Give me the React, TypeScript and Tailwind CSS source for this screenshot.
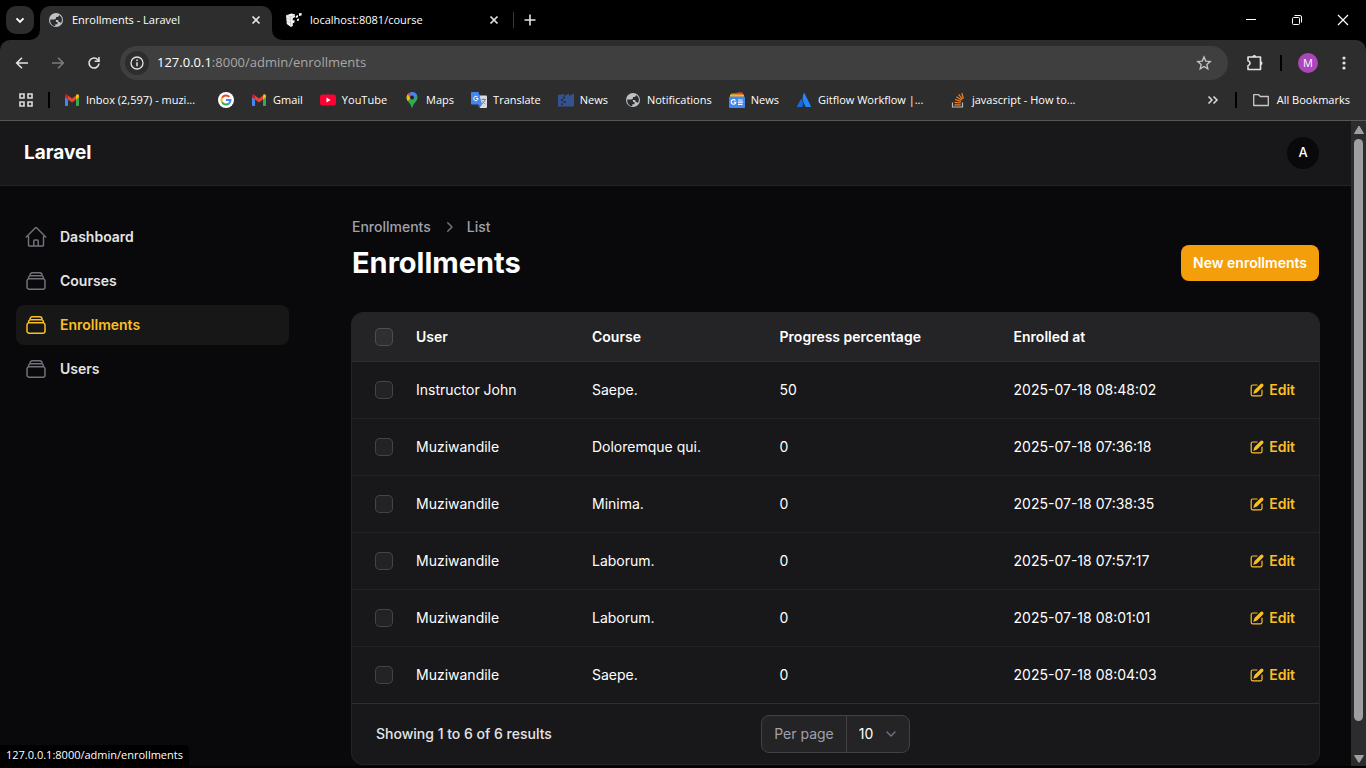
import type { ReactNode } from 'react';
import {
  HiOutlineHome,
  HiOutlineRectangleStack,
  HiMiniPencilSquare,
  HiMiniChevronRight,
} from 'react-icons/hi2';

/* ---------- browser icons ---------- */

function Globe() {
  return (
    <svg viewBox="0 0 16 16" className="size-4 shrink-0" aria-hidden="true">
      <circle cx="8" cy="8" r="7" fill="#bdc1c6" />
      <path
        d="M2.200 7.400H6c1.400 0 2 .8 2 1.800v.8h1.500v2.200H7.300v1.900C4.200 14 2 11.300 2.200 7.400zM10.900 3v.6c0 .9-.6 1.400-1.500 1.400H8v1.300c0 .5-.4.8-.8.800H5.900v1h3.600c.6 0 1 .4 1 1V10h.9c.7 0 1.200.4 1.400 1 1.900-2.300 1.500-6-1.900-8z"
        fill="#2d2d2d"
      />
    </svg>
  );
}

function Cubes() {
  return (
    <svg viewBox="0 0 16 16" className="size-4 shrink-0" aria-hidden="true">
      <path d="M0 3.200L5.500 1.400 9 2.600V5L6.800 6.200v2.300L8.500 8v2.500l-1.700.8V14l-2 1L.8 12z" fill="#f4f4f4" />
      <path d="M.4 6l4.200 1.600M.6 9l4 1.900M4.700 4.800V15M.4 3.400l4.300 1.400L9 3" stroke="#8a8a8a" strokeWidth=".4" fill="none" />
      <path d="M9.800 4l2.200-1v2.200l-2.200.8zM13 1.300l2.600-.4v2.600l-2.600.5zM11 7.200l2-.7v2l-2 .6z" fill="#f4f4f4" />
    </svg>
  );
}

function GmailIcon() {
  return (
    <svg viewBox="0 0 16 16" className="size-4 shrink-0" aria-hidden="true">
      <path d="M1 4.500V13c0 .6.400 1 1 1h2V6.800z" fill="#4285f4" />
      <path d="M15 4.500V13c0 .6-.4 1-1 1h-2V6.800z" fill="#34a853" />
      <path d="M12 3.500v4l3-2.300V4c0-1.500-1.600-2.200-2.700-1.300z" fill="#fbbc04" />
      <path d="M4 7.500v-4l4 3 4-3v4l-4 3z" fill="#ea4335" />
      <path d="M1 4v1.200l3 2.300v-4l-.4-.8C2.500 1.900 1 2.600 1 4z" fill="#c5221f" />
    </svg>
  );
}

function GoogleIcon() {
  return (
    <svg viewBox="0 0 16 16" className="size-4 shrink-0" aria-hidden="true">
      <circle cx="8" cy="8" r="8" fill="#fff" />
      <g fill="none" strokeWidth="2">
        <path d="M11.300 4.900A4.500 4.500 0 0 0 4.100 5.700" stroke="#ea4335" />
        <path d="M4.100 5.700a4.500 4.500 0 0 0 0 4.600" stroke="#fbbc05" />
        <path d="M4.100 10.300a4.500 4.500 0 0 0 6.800 1.200" stroke="#34a853" />
        <path d="M10.900 11.500A4.500 4.500 0 0 0 12.500 8H8" stroke="#4285f4" />
      </g>
    </svg>
  );
}

function YouTubeIcon() {
  return (
    <svg viewBox="0 0 16 16" className="size-4 shrink-0" aria-hidden="true">
      <rect x="0" y="2.500" width="16" height="11" rx="2.800" fill="#ff0033" />
      <path d="M6.500 5.600v4.800L10.600 8z" fill="#fff" />
    </svg>
  );
}

function MapsIcon() {
  return (
    <svg viewBox="0 0 16 16" className="size-4 shrink-0" aria-hidden="true">
      <path d="M8 16c-.6 0-.7-2.400-2-4.200C4.600 9.900 2.600 8.400 2.600 5.400c0-1.300.4-2.300 1.100-3.200L8 5.400l5-2.500c.3.800.5 1.600.5 2.500 0 3-2.100 4.500-3.500 6.400-1.300 1.800-1.400 4.200-2 4.200z" fill="#34a853" />
      <path d="M2.600 5.400c0 1.500.5 2.700 1.200 3.700L9 4 5 1.200C3.500 2 2.600 3.600 2.600 5.400z" fill="#fbbc04" />
      <path d="M3.700 2.200A5.400 5.400 0 0 1 6.400.3l1 4.100-1.400 1z" fill="#ea4335" />
      <path d="M6.400.2c2.800-.8 5.700.5 6.800 3L9 8 6.200 4z" fill="#4285f4" />
      <circle cx="8" cy="5.400" r="2" fill="#202124" />
    </svg>
  );
}

function TranslateIcon() {
  return (
    <svg viewBox="0 0 16 16" className="size-4 shrink-0" aria-hidden="true">
      <path d="M6 3.500h9a1 1 0 0 1 1 1V15a1 1 0 0 1-1 1H9z" fill="#dadce0" />
      <path d="M1 0h6.500l3.700 12.500H1a1 1 0 0 1-1-1V1a1 1 0 0 1 1-1z" fill="#4285f4" />
      <path d="M8 16l3.200-3.500H7z" fill="#3367d6" />
      <path d="M6.700 5.200a2.200 2.200 0 1 0 .4 1.400H5" stroke="#fff" strokeWidth="1" fill="none" />
      <path d="M10.500 7.500h4.500M12.700 6.500v1M14 7.500c-.3 2-1.500 3.300-3 4.300M11.500 9c.7 1.500 1.600 2.400 2.800 3" stroke="#747a80" strokeWidth=".9" fill="none" />
    </svg>
  );
}

function FactoryIcon() {
  return (
    <svg viewBox="0 0 16 16" className="size-4 shrink-0" aria-hidden="true">
      <path d="M0 3l6-1v2l5-2.500V4l5-2.500V14.500H0z" fill="#35548f" />
      <path d="M5 4.500h2v2H5zM3 7h2v2H3zM5.500 9h2v2h-2zM3 11.500h2v1.500H3z" fill="#202c48" />
    </svg>
  );
}

function GoogleNewsIcon() {
  return (
    <svg viewBox="0 0 16 16" className="size-4 shrink-0" aria-hidden="true">
      <path d="M2 1.500L11 .5l1 4H2z" fill="#34a853" />
      <path d="M5 1.200l8.500-1L14.500 5H5z" fill="#ea4335" />
      <path d="M1 2.500h14V6H1z" fill="#fbbc04" />
      <rect y="4.500" width="16" height="11.500" rx="1" fill="#4285f4" />
      <path d="M6.400 8.600a2.300 2.300 0 1 0 .4 1.700H4.800M9 8h4.500M9 10.200h5M9 12.400h4.500" stroke="#fff" strokeWidth="1.200" fill="none" />
    </svg>
  );
}

function AtlassianIcon() {
  return (
    <svg viewBox="0 0 16 16" className="size-4 shrink-0" aria-hidden="true">
      <path d="M4.900 7.300c.2-.3.700-.3.900.1C7.300 10 7.500 12.300 6.300 15H1.500a.5.500 0 0 1-.5-.7z" fill="#1868db" />
      <path d="M7.700 1.300c.2-.4.600-.4.800 0l6.400 13a.5.500 0 0 1-.4.700H10c-.3 0-.5-.1-.6-.4C7 9.500 5.700 6.500 7.700 1.300z" fill="#2684ff" />
    </svg>
  );
}

function StackIcon() {
  return (
    <svg viewBox="0 0 16 16" className="size-4 shrink-0" aria-hidden="true">
      <path d="M2.500 10.500V15h10v-4.500" stroke="#bcbbbb" strokeWidth="1.200" fill="none" />
      <path d="M4.500 12.800h6.200M4.600 10.300l6.100.7M5.100 7.500l5.900 1.900M6.400 4.700l5.200 3.400M8.600 2.300l3.900 4.900M11.800 1l1.600 5.500" stroke="#f48024" strokeWidth="1.200" fill="none" />
    </svg>
  );
}

function Close() {
  return (
    <svg viewBox="0 0 16 16" className="size-4" aria-hidden="true">
      <path d="M4.500 4.500l7 7M11.500 4.500l-7 7" stroke="#e3e3e3" strokeWidth="1.700" />
    </svg>
  );
}

/* ---------- browser chrome ---------- */

function TabStrip() {
  return (
    <div className="flex h-10 shrink-0 items-end bg-black pl-1.5 text-[11px]">
      <button aria-label="Search tabs" className="mb-1.5 flex size-7 items-center justify-center rounded-[10px] bg-[#2d2d2d]">
        <svg viewBox="0 0 16 16" className="size-4" aria-hidden="true">
          <path d="M4.500 6.300L8 9.800l3.500-3.500" stroke="#fff" strokeWidth="1.900" fill="none" />
        </svg>
      </button>
      <div className="relative ml-1.5 flex h-[34px] w-[232px] items-center rounded-t-[10px] bg-[#2d2d2d] pr-2 pb-1.5 pl-2">
        <svg viewBox="0 0 10 10" className="absolute bottom-0 -left-2.5 size-2.5" aria-hidden="true">
          <path d="M10 0v10H0A10 10 0 0 0 10 0z" fill="#2d2d2d" />
        </svg>
        <svg viewBox="0 0 10 10" className="absolute -right-2.5 bottom-0 size-2.5" aria-hidden="true">
          <path d="M0 0v10h10A10 10 0 0 1 0 0z" fill="#2d2d2d" />
        </svg>
        <Globe />
        <span className="ml-2 flex-1 text-white">Enrollments - Laravel</span>
        <button aria-label="Close tab"><Close /></button>
      </div>
      <div className="flex h-[34px] w-[241px] items-center pr-[11px] pb-1.5 pl-3.5">
        <Cubes />
        <span className="ml-2 flex-1 text-white">localhost:8081/course</span>
        <button aria-label="Close tab"><Close /></button>
      </div>
      <div className="mb-3 h-4 w-px bg-[#3a3a3a]" />
      <button aria-label="New tab" className="mb-3 ml-2">
        <svg viewBox="0 0 16 16" className="size-4" aria-hidden="true">
          <path d="M8 2.500v11M2.500 8h11" stroke="#e3e3e3" strokeWidth="1.600" />
        </svg>
      </button>
      <div className="ml-auto flex h-10 items-center">
        <button aria-label="Minimize" className="flex w-[46px] justify-center">
          <svg viewBox="0 0 12 12" className="size-3" aria-hidden="true"><path d="M1 5.500h10" stroke="#fff" /></svg>
        </button>
        <button aria-label="Restore" className="flex w-[46px] justify-center">
          <svg viewBox="0 0 12 12" className="size-3" aria-hidden="true">
            <rect x="1.500" y="3.500" width="7" height="7" rx="1" stroke="#fff" fill="none" />
            <path d="M3.500 1.500H9A1.500 1.500 0 0 1 10.500 3v5.500" stroke="#fff" fill="none" />
          </svg>
        </button>
        <button aria-label="Close window" className="flex w-[46px] justify-center">
          <svg viewBox="0 0 12 12" className="size-3" aria-hidden="true"><path d="M1 1l10 10M11 1L1 11" stroke="#fff" strokeWidth="1.200" /></svg>
        </button>
      </div>
    </div>
  );
}

function AddressBar() {
  return (
    <div className="flex h-[46px] shrink-0 items-center rounded-t-[10px] bg-[#2d2d2d]">
      <div className="flex w-[120px] items-center gap-5 pl-3.5">
        <button aria-label="Back">
          <svg viewBox="0 0 16 16" className="size-4" aria-hidden="true">
            <path d="M14 8H3M8 2.700L2.700 8 8 13.300" stroke="#e3e3e3" strokeWidth="1.600" fill="none" />
          </svg>
        </button>
        <button aria-label="Forward">
          <svg viewBox="0 0 16 16" className="size-4" aria-hidden="true">
            <path d="M2 8h11M8 2.700L13.300 8 8 13.300" stroke="#7c7c7c" strokeWidth="1.600" fill="none" />
          </svg>
        </button>
        <button aria-label="Reload">
          <svg viewBox="0 0 16 16" className="size-4" aria-hidden="true">
            <path d="M13 8.500A5 5 0 1 1 11.800 4.700L13.500 6.500" stroke="#e3e3e3" strokeWidth="1.600" fill="none" />
            <path d="M13.700 2v5H8.700V5.500h3.500V2z" fill="#e3e3e3" />
          </svg>
        </button>
      </div>
      <div className="flex h-[34px] flex-1 items-center rounded-full bg-[#3f3f3f] pr-4 pl-[5px]">
        <button aria-label="View site information" className="flex size-6 items-center justify-center rounded-full bg-[#2d2d2d]">
          <svg viewBox="0 0 16 16" className="size-4" aria-hidden="true">
            <circle cx="8" cy="8" r="6" stroke="#e3e3e3" strokeWidth="1.300" fill="none" />
            <path d="M8 7.200v4M8 4.500v1.500" stroke="#e3e3e3" strokeWidth="1.500" />
          </svg>
        </button>
        <span className="ml-2 flex-1 text-[13px] text-[#a8a8a8]">
          <span className="text-white">127.0.0.1</span>:8000/admin/enrollments
        </span>
        <button aria-label="Bookmark this tab">
          <svg viewBox="0 0 16 16" className="size-4" aria-hidden="true">
            <path d="M8 1.900l1.750 4.150 4.500.4-3.400 2.950 1 4.400L8 11.500l-3.850 2.300 1-4.400-3.400-2.950 4.500-.4z" stroke="#c7c7c7" strokeWidth="1.300" fill="none" />
          </svg>
        </button>
      </div>
      <div className="flex items-center pl-[17px]">
        <button aria-label="Extensions">
          <svg viewBox="0 0 20 20" className="size-5" aria-hidden="true">
            <path d="M3 4h12.500v12.500H3v-3.800a2.500 2.500 0 0 0 0-4.900z" stroke="#e3e3e3" strokeWidth="1.600" strokeLinejoin="round" fill="none" />
            <path d="M7.300 4a2 2 0 0 1 4 0zM15.500 8.200a2 2 0 0 1 0 4z" fill="#e3e3e3" />
          </svg>
        </button>
        <div className="ml-[15px] h-4 w-0.5 bg-black" />
        <button aria-label="Profile M" className="ml-4 flex size-5 items-center justify-center rounded-full bg-[#ab47bc] text-[11px] font-medium text-white">M</button>
        <button aria-label="Menu" className="mr-3.5 ml-[18px]">
          <svg viewBox="0 0 16 16" className="size-4" aria-hidden="true">
            <circle cx="8" cy="3" r="1.600" fill="#e3e3e3" />
            <circle cx="8" cy="8" r="1.600" fill="#e3e3e3" />
            <circle cx="8" cy="13" r="1.600" fill="#e3e3e3" />
          </svg>
        </button>
      </div>
    </div>
  );
}

const bookmarks: { icon: ReactNode; label?: string; long?: boolean }[] = [
  { icon: <GmailIcon />, label: 'Inbox (2,597) - muzi...', long: true },
  { icon: <GoogleIcon /> },
  { icon: <GmailIcon />, label: 'Gmail' },
  { icon: <YouTubeIcon />, label: 'YouTube' },
  { icon: <MapsIcon />, label: 'Maps' },
  { icon: <TranslateIcon />, label: 'Translate' },
  { icon: <FactoryIcon />, label: 'News' },
  { icon: <Globe />, label: 'Notifications' },
  { icon: <GoogleNewsIcon />, label: 'News' },
  { icon: <AtlassianIcon />, label: 'Gitflow Workflow |...', long: true },
  { icon: <StackIcon />, label: 'javascript - How to...', long: true },
];

function BookmarksBar() {
  return (
    <div className="flex h-[35px] shrink-0 items-center border-b border-[#565656] bg-[#2d2d2d] pb-1.5 text-[11px] text-white">
      <button aria-label="Tab groups" className="ml-[18px]">
        <svg viewBox="0 0 16 16" className="size-4" aria-hidden="true">
          <path d="M2 2h4v4H2zM10 2h4v4h-4zM2 10h4v4H2zM10 10h4v4h-4z" stroke="#dcdcdc" strokeWidth="1.600" fill="none" />
        </svg>
      </button>
      <div className="ml-3.5 h-4 w-0.5 bg-black" />
      <nav aria-label="Bookmarks" className="ml-3.5 flex items-center gap-[17px]">
        {bookmarks.map((b, i) => (
          <a key={i} href="#" aria-label={b.label ?? 'Google'} className="flex items-center gap-1.5 whitespace-nowrap">
            {b.icon}
            {b.label && <span className={b.long ? 'w-[115px]' : undefined}>{b.label}</span>}
          </a>
        ))}
      </nav>
      <button aria-label="More bookmarks" className="ml-auto">
        <svg viewBox="0 0 16 16" className="size-4" aria-hidden="true">
          <path d="M3.500 4.500L7 8l-3.500 3.500M8.500 4.500L12 8l-3.500 3.500" stroke="#dcdcdc" strokeWidth="1.500" fill="none" />
        </svg>
      </button>
      <div className="ml-3.5 h-4 w-0.5 bg-black" />
      <a href="#" className="mr-4 ml-4 flex items-center gap-2 whitespace-nowrap">
        <svg viewBox="0 0 16 16" className="size-4" aria-hidden="true">
          <path d="M.7 2.700h5l1.600 1.800h8v9H.7z" stroke="#c7c7c7" strokeWidth="1.300" strokeLinejoin="round" fill="none" />
        </svg>
        All Bookmarks
      </a>
    </div>
  );
}

function Scrollbar() {
  return (
    <div className="flex w-[15px] shrink-0 flex-col items-center bg-[#2c2c2c]" aria-hidden="true">
      <svg viewBox="0 0 10 8" className="mt-[5px] h-2 w-2.5"><path d="M5 0L9.500 7.500H.5z" fill="#9f9f9f" stroke="#9f9f9f" strokeLinejoin="round" /></svg>
      <div className="mt-[5px] mb-[34px] w-[9px] flex-1 rounded-full bg-[#9f9f9f]" />
      <svg viewBox="0 0 10 8" className="mb-[3px] h-2 w-2.5"><path d="M5 7.500L9.500.5H.5z" fill="#9f9f9f" stroke="#9f9f9f" strokeLinejoin="round" /></svg>
    </div>
  );
}

/* ---------- admin panel ---------- */

const navItems = [
  { label: 'Dashboard', Icon: HiOutlineHome },
  { label: 'Courses', Icon: HiOutlineRectangleStack },
  { label: 'Enrollments', Icon: HiOutlineRectangleStack, active: true },
  { label: 'Users', Icon: HiOutlineRectangleStack },
];

function Sidebar() {
  return (
    <nav aria-label="Main" className="flex w-80 shrink-0 flex-col gap-1 pt-[31px] pr-[31px] pl-4">
      {navItems.map(({ label, Icon, active }) => (
        <a
          key={label}
          href="#"
          className={`flex h-10 items-center gap-3 rounded-lg px-2 text-sm font-semibold ${
            active ? 'bg-[#171717] text-[#fbbf24]' : 'text-[#e4e4e7]'
          }`}
        >
          <Icon className={`size-6 ${active ? 'text-[#fbbf24]' : 'text-[#71717a]'}`} />
          {label}
        </a>
      ))}
    </nav>
  );
}

const rows = [
  ['Instructor John', 'Saepe.', '50', '2025-07-18 08:48:02'],
  ['Muziwandile', 'Doloremque qui.', '0', '2025-07-18 07:36:18'],
  ['Muziwandile', 'Minima.', '0', '2025-07-18 07:38:35'],
  ['Muziwandile', 'Laborum.', '0', '2025-07-18 07:57:17'],
  ['Muziwandile', 'Laborum.', '0', '2025-07-18 08:01:01'],
  ['Muziwandile', 'Saepe.', '0', '2025-07-18 08:04:03'],
];

function Checkbox({ label }: { label: string }) {
  return (
    <input
      type="checkbox"
      aria-label={label}
      className="block size-[18px] appearance-none rounded-[5px] border border-white/15 bg-white/5"
    />
  );
}

function EnrollmentsTable() {
  return (
    <section className="-mx-px mt-[31px] overflow-hidden rounded-xl border border-[#242427] bg-[#18181b]">
      <table className="w-full table-fixed border-collapse text-left text-sm text-white">
        <colgroup>
          <col className="w-[52px]" />
          <col className="w-[18.2%]" />
          <col className="w-[19.4%]" />
          <col className="w-[24.2%]" />
          <col />
          <col className="w-[12%]" />
        </colgroup>
        <thead>
          <tr className="h-[48px] border-b border-[#2f2f32] bg-[#242427]">
            <th className="pl-[23px]"><Checkbox label="Select all" /></th>
            <th className="px-3 font-semibold">User</th>
            <th className="px-3 font-semibold">Course</th>
            <th className="px-3 font-semibold">Progress percentage</th>
            <th className="px-3 font-semibold">Enrolled at</th>
            <th aria-label="Actions" />
          </tr>
        </thead>
        <tbody>
          {rows.map((row, i) => (
            <tr key={i} className="h-[57px] border-b border-[#242427] last:border-[#2f2f32]">
              <td className="pl-[23px]"><Checkbox label={`Select row ${i + 1}`} /></td>
              {row.map((cell, j) => (
                <td key={j} className="px-3">{cell}</td>
              ))}
              <td className="pr-6">
                <a href="#" className="flex items-center justify-end gap-1 font-semibold text-[#fbbf24]">
                  <HiMiniPencilSquare className="size-4" />
                  Edit
                </a>
              </td>
            </tr>
          ))}
        </tbody>
      </table>
      <div className="grid h-[60px] grid-cols-[1fr_auto_1fr] items-center px-6">
        <span className="text-sm font-medium text-[#e4e4e7]">Showing 1 to 6 of 6 results</span>
        <div className="relative flex h-[38px] items-center rounded-lg border border-[#414144] bg-[#242427] text-sm text-white">
          <label htmlFor="per-page" className="flex h-full items-center border-r border-[#414144] px-3 text-[#a1a1aa]">Per page</label>
          <select id="per-page" defaultValue="10" className="h-full w-[62px] appearance-none bg-transparent pl-3 text-white">
            <option>5</option>
            <option>10</option>
            <option>25</option>
            <option>50</option>
          </select>
          <svg viewBox="0 0 20 20" className="pointer-events-none absolute right-2 size-5" aria-hidden="true">
            <path d="M6 8l4 4 4-4" stroke="#6b7280" strokeWidth="1.500" strokeLinecap="round" strokeLinejoin="round" fill="none" />
          </svg>
        </div>
      </div>
    </section>
  );
}

export default function App() {
  return (
    <div className="flex h-screen flex-col overflow-hidden bg-black font-['Open_Sans','Noto_Sans',sans-serif]">
      <TabStrip />
      <div className="bg-black">
        <AddressBar />
      </div>
      <BookmarksBar />
      <div className="relative mb-0.5 flex min-h-0 flex-1 bg-[#09090b]">
        <div className="min-w-0 flex-1 overflow-hidden font-[Inter,sans-serif]">
          <header className="flex h-[65px] items-center justify-between border-b border-[#242427] bg-[#18181b] pr-8 pl-6">
            <a href="#" className="text-[19px] font-bold text-white">Laravel</a>
            <button aria-label="User menu" className="flex size-8 items-center justify-center rounded-full bg-[#09090b] text-[13px] font-medium text-white">A</button>
          </header>
          <div className="flex">
            <Sidebar />
            <main className="min-w-0 flex-1 px-8 pt-[31px]">
              <div className="flex items-end justify-between">
                <div>
                  <nav aria-label="Breadcrumb" className="flex items-center gap-2 text-sm font-medium text-[#a1a1aa]">
                    <a href="#">Enrollments</a>
                    <HiMiniChevronRight className="size-5 text-[#71717a]" />
                    <a href="#">List</a>
                  </nav>
                  <h1 className="mt-2 text-[29px] leading-9 font-bold text-white">Enrollments</h1>
                </div>
                <button className="h-9 rounded-lg bg-[#f59e0b] px-3 text-sm font-semibold text-white">New enrollments</button>
              </div>
              <EnrollmentsTable />
            </main>
          </div>
        </div>
        <Scrollbar />
        <div className="absolute bottom-0 left-0 flex h-[21px] items-center rounded-tr bg-black px-1.5 text-[11px] text-white">
          127.0.0.1:8000/admin/enrollments
        </div>
      </div>
    </div>
  );
}
